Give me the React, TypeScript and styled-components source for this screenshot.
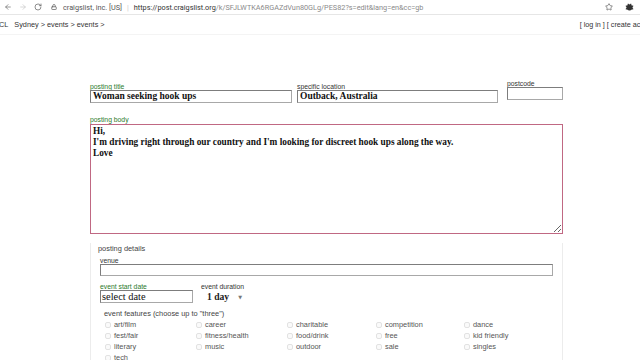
import React from 'react'
import styled, { createGlobalStyle } from 'styled-components'
import { ArrowLeft, ArrowRight, RotateCw, Lock, Star } from 'lucide-react'

const GlobalStyle = createGlobalStyle`
  html, body {
    margin: 0;
    padding: 0;
    background: #ffffff;
    overflow: hidden;
  }
  body {
    font-family: "Liberation Sans", Arial, sans-serif;
    color: #222;
  }
`

const BrowserBar = styled.div`
  display: flex;
  align-items: center;
  height: 14px;
  padding: 0 4px;
  border-bottom: 1px solid #e6e6e6;
  font-family: Roboto, "Liberation Sans", sans-serif;
  font-size: 7.3px;
  color: #555;
  white-space: nowrap;
`

const NavIcon = styled.span<{ $faded?: boolean }>`
  display: flex;
  align-items: center;
  margin-right: 7px;
  color: ${p => (p.$faded ? '#c4c4c4' : '#666')};
`

const Origin = styled.span`
  margin-left: 6px;
  color: #555;
`

const Divider = styled.span`
  margin: 0 5px;
  color: #ccc;
`

const Host = styled.span`
  color: #333;
`

const Path = styled.span`
  color: #8a8a8a;
`

const BarTools = styled.div`
  display: flex;
  align-items: center;
  gap: 12px;
  margin-left: auto;
  margin-right: 2px;
  color: #555;
`

const SiteHeader = styled.div`
  display: flex;
  align-items: center;
  justify-content: space-between;
  width: 662px;
  height: 19px;
  border-bottom: 1px solid #f4f4f4;
  font-size: 7.3px;
  color: #333;
  white-space: nowrap;
`

const Crumbs = styled.div`
  display: flex;
  gap: 6px;
`

const Logo = styled.span`
  margin-left: -1px;
`

const UserLinks = styled.div`
  font-size: 7.2px;
  color: #333;
`

const Main = styled.form`
  width: 473px;
  margin: 48px 0 0 90px;
`

const TopRow = styled.div`
  display: flex;
  align-items: flex-start;
`

const Field = styled.div<{ $width: number; $gap?: number; $lift?: number }>`
  display: flex;
  flex-direction: column;
  width: ${p => p.$width}px;
  margin-right: ${p => p.$gap ?? 0}px;
  margin-top: ${p => -(p.$lift ?? 0)}px;
`

const Label = styled.label<{ $required?: boolean }>`
  display: block;
  height: 7px;
  font-size: 6.8px;
  line-height: 7px;
  color: ${p => (p.$required ? '#2c7a2c' : '#333')};
  white-space: nowrap;
`

const TextInput = styled.div<{ $height?: number }>`
  box-sizing: border-box;
  height: ${p => p.$height ?? 13}px;
  border: 1px solid #a8a8a8;
  border-top-color: #7d7d7d;
  border-left-color: #7d7d7d;
  padding: 0 2px;
  font-family: "Liberation Serif", "Times New Roman", serif;
  font-weight: bold;
  font-size: 9.5px;
  line-height: 11px;
  color: #111;
  white-space: nowrap;
  overflow: hidden;
`

const BodyField = styled.div`
  margin-top: 13px;
  display: flex;
  flex-direction: column;
`

const BodyText = styled.textarea`
  box-sizing: border-box;
  width: 473px;
  height: 110px;
  margin: 1px 0 0;
  padding: 1px 2px;
  border: 1px solid #c06883;
  outline: none;
  font-family: "Liberation Serif", "Times New Roman", serif;
  font-weight: bold;
  font-size: 9.3px;
  line-height: 11px;
  color: #111;
  background: #fff;
  resize: both;
`

const Details = styled.div`
  box-sizing: border-box;
  width: 473px;
  margin-top: 9px;
  padding: 1px 9px 0;
  border: 1px solid #ececec;
  border-top: none;
  border-bottom: none;
  height: 130px;
`

const Legend = styled.div`
  margin-left: -2px;
  font-size: 7.4px;
  line-height: 9px;
  color: #444;
`

const VenueField = styled.div`
  margin-top: 4px;
`

const DateRow = styled.div`
  display: flex;
  align-items: flex-start;
  margin-top: 7px;
`

const DateInput = styled(TextInput)`
  width: 93px;
  font-weight: normal;
  font-size: 10.4px;
  padding: 0 1px;
  line-height: 12px;
`

const DurationField = styled.div`
  margin-left: 8px;
  display: flex;
  flex-direction: column;
`

const Select = styled.div`
  display: flex;
  align-items: center;
  height: 13px;
  padding-left: 6px;
  gap: 9px;
  font-family: "Liberation Serif", "Times New Roman", serif;
  font-weight: bold;
  font-size: 9.6px;
  color: #222;
`

const Caret = styled.span`
  font-family: "DejaVu Sans", sans-serif;
  font-weight: normal;
  font-size: 5px;
  color: #777;
`

const FeaturesTitle = styled.div`
  margin: 6px 0 0 4px;
  font-size: 7.4px;
  line-height: 9px;
  color: #444;
`

const FeatureGrid = styled.div`
  display: grid;
  grid-template-columns: 91px 91px 89px 88px 90px;
  grid-auto-rows: 11px;
  margin: 1px 0 0 5px;
`

const Feature = styled.label`
  display: flex;
  align-items: center;
  gap: 3px;
  font-size: 7.4px;
  color: #555;
  white-space: nowrap;
`

const Box = styled.span`
  box-sizing: border-box;
  width: 6px;
  height: 6px;
  border: 1px solid #e2e2e2;
  border-radius: 2px;
  background: #fafafa;
`

const features = [
  'art/film', 'career', 'charitable', 'competition', 'dance',
  'fest/fair', 'fitness/health', 'food/drink', 'free', 'kid friendly',
  'literary', 'music', 'outdoor', 'sale', 'singles',
  'tech',
]

function ExtensionIcon() {
  return (
    <svg width="9" height="9" viewBox="0 0 10 10">
      <circle cx="5" cy="5" r="3.2" fill="#333" />
      <path d="M1 3 L3 5 L1 7 M9 3 L7 5 L9 7 M3 1 L5 3 L7 1" stroke="#333" strokeWidth="1.2" fill="none" />
    </svg>
  )
}

export default function App(): JSX.Element {
  return (
    <>
      <GlobalStyle />
      <BrowserBar>
        <NavIcon><ArrowLeft size={8} strokeWidth={2} /></NavIcon>
        <NavIcon $faded><ArrowRight size={8} strokeWidth={2} /></NavIcon>
        <NavIcon><RotateCw size={8} strokeWidth={2.2} /></NavIcon>
        <NavIcon style={{ marginRight: 0, marginLeft: 2 }}><Lock size={6} strokeWidth={3} /></NavIcon>
        <Origin>craigslist, inc. [US]</Origin>
        <Divider>|</Divider>
        <Host>https://post.craigslist.org</Host>
        <Path>/k/SFJLWTKA6RGAZdVun80GLg/PES82?s=edit&amp;lang=en&amp;cc=gb</Path>
        <BarTools>
          <Star size={8} strokeWidth={2} />
          <ExtensionIcon />
        </BarTools>
      </BrowserBar>

      <SiteHeader>
        <Crumbs>
          <Logo>CL</Logo>
          <span>Sydney &gt; events &gt; events &gt;</span>
        </Crumbs>
        <UserLinks>[ log in ] [ create account ]</UserLinks>
      </SiteHeader>

      <Main>
        <TopRow>
          <Field $width={202} $gap={5}>
            <Label $required>posting title</Label>
            <TextInput>Woman seeking hook ups</TextInput>
          </Field>
          <Field $width={201} $gap={9}>
            <Label>specific location</Label>
            <TextInput>Outback, Australia</TextInput>
          </Field>
          <Field $width={56} $lift={3}>
            <Label>postcode</Label>
            <TextInput $height={13} />
          </Field>
        </TopRow>

        <BodyField>
          <Label $required>posting body</Label>
          <BodyText
            readOnly
            defaultValue={"Hi,\nI'm driving right through our country and I'm looking for discreet hook ups along the way.\nLove"}
          />
        </BodyField>

        <Details>
          <Legend>posting details</Legend>
          <VenueField>
            <Label>venue</Label>
            <TextInput $height={12} />
          </VenueField>
          <DateRow>
            <div>
              <Label $required>event start date</Label>
              <DateInput>select date</DateInput>
            </div>
            <DurationField>
              <Label>event duration</Label>
              <Select>
                1 day <Caret>▼</Caret>
              </Select>
            </DurationField>
          </DateRow>
          <FeaturesTitle>event features (choose up to "three")</FeaturesTitle>
          <FeatureGrid>
            {features.map(f => (
              <Feature key={f}>
                <Box />
                {f}
              </Feature>
            ))}
          </FeatureGrid>
        </Details>
      </Main>
    </>
  )
}
